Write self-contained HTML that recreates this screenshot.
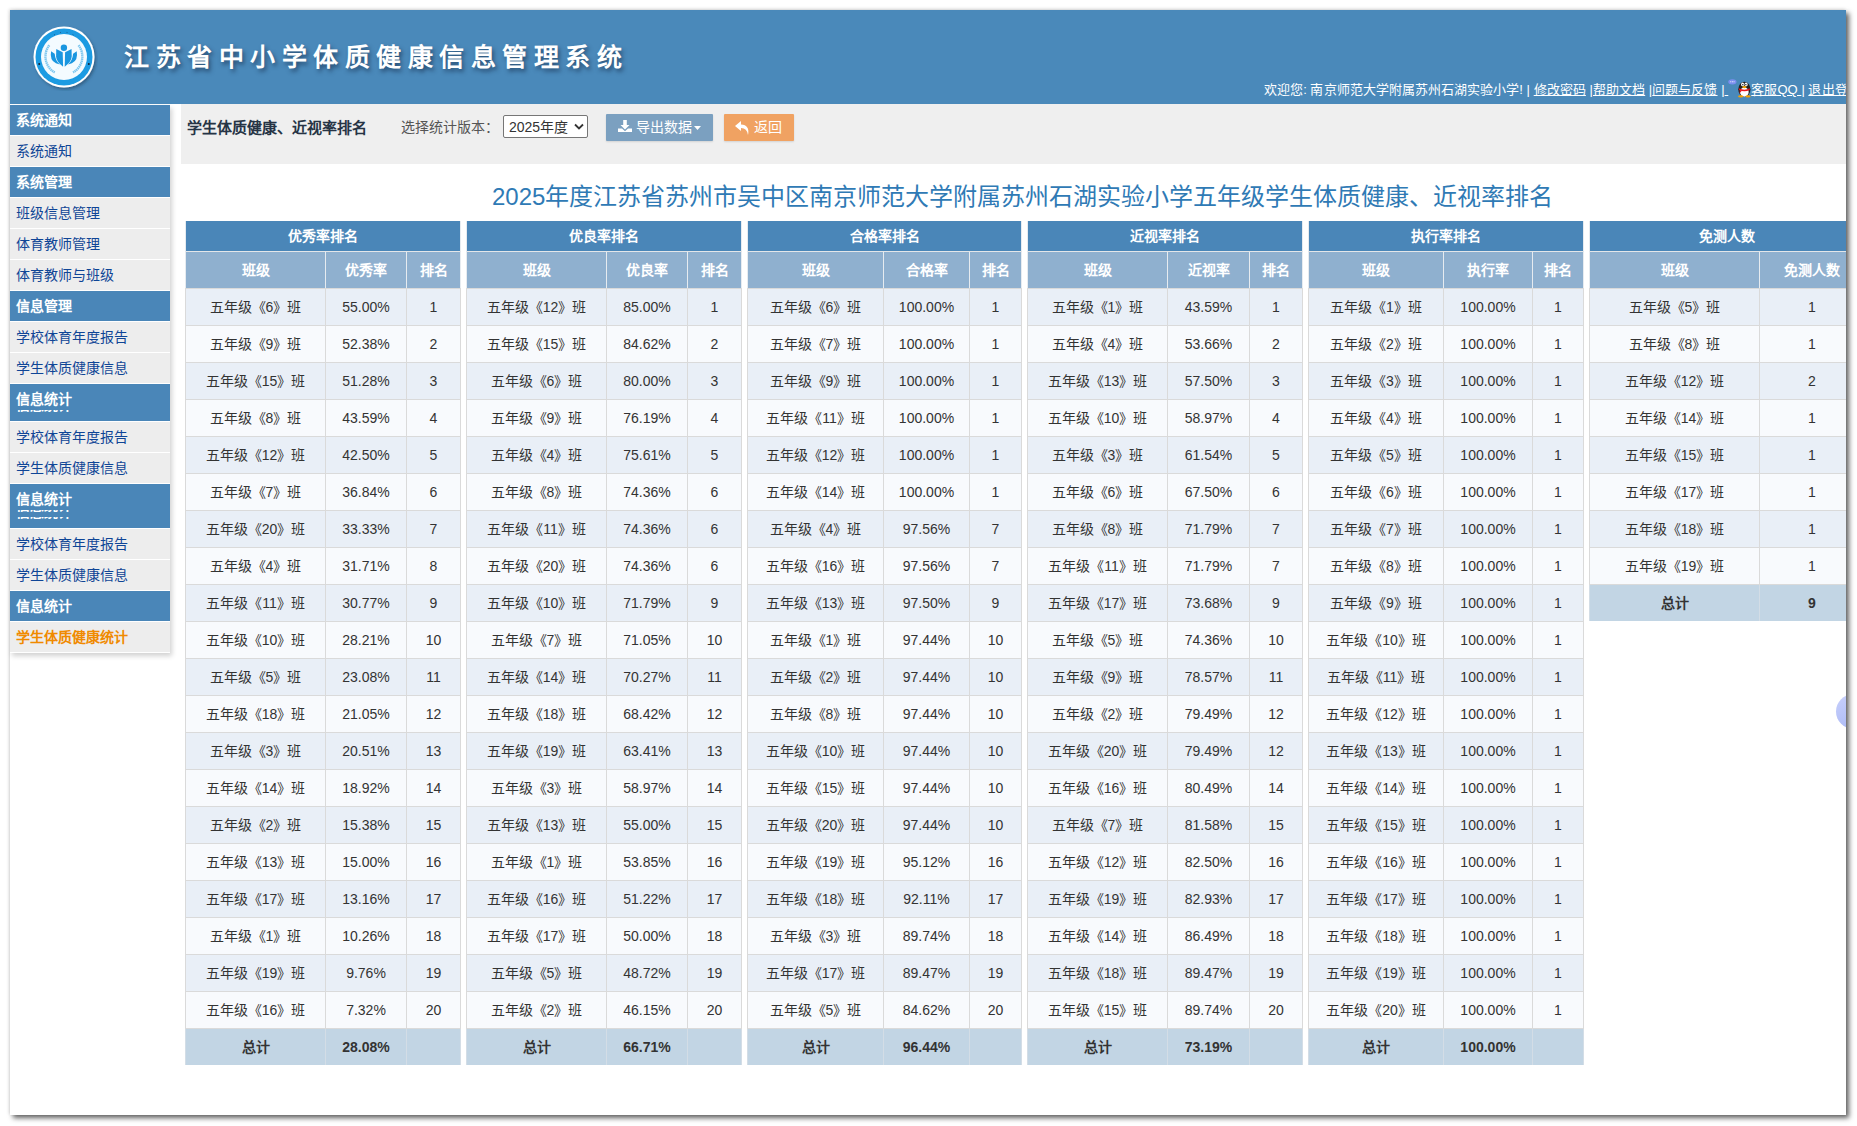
<!DOCTYPE html>
<html lang="zh-CN">
<head>
<meta charset="utf-8">
<title>江苏省中小学体质健康信息管理系统</title>
<style>
html,body{margin:0;padding:0;background:#fff;}
body{width:1857px;height:1126px;overflow:hidden;position:relative;font-family:"Liberation Sans",sans-serif;font-size:14px;color:#333;}
.win{position:absolute;left:10px;top:10px;width:1836px;height:1105px;background:#fff;box-shadow:3px 3px 5px rgba(0,0,0,.62),-1px -1px 3px rgba(0,0,0,.12);}
#clip{position:absolute;left:0;top:0;width:1846px;height:1115px;overflow:hidden;}
.a{position:absolute;white-space:nowrap;}
#hdr{position:absolute;left:10px;top:10px;width:1836px;height:94px;background:#4a89ba;}
#logo{position:absolute;left:30px;top:23px;width:68px;height:68px;}
#title{position:absolute;left:124px;top:37px;font-size:25px;line-height:40px;color:#fff;letter-spacing:6.5px;font-weight:bold;text-shadow:2px 3px 4px rgba(20,40,70,.6);}
#welcome{position:absolute;left:1264px;top:81px;font-size:13px;line-height:18px;color:#fff;white-space:nowrap;letter-spacing:.05px;}
#welcome u{text-decoration:underline;}
/* sidebar */
.sb{position:absolute;left:10px;width:160px;height:30px;line-height:30px;padding-left:6px;box-sizing:border-box;font-size:14px;white-space:nowrap;overflow:hidden;}
.sh{background:#4a86b8;color:#fff;font-weight:bold;}
.si{background:#ededed;color:#0f4596;}
.si.act{color:#f08a00;font-weight:bold;}
#sbshadow{position:absolute;left:10px;top:105px;width:160px;height:548px;box-shadow:2px 3px 5px rgba(0,0,0,.18);background:#fff;}
.strip{position:absolute;left:10px;width:160px;overflow:hidden;height:2px;}
.strip span{position:absolute;left:6px;top:-20px;color:#fff;font-weight:bold;font-size:14px;line-height:30px;}
/* toolbar */
#tbar{position:absolute;left:181px;top:104px;width:1665px;height:60px;background:#efefef;}
#pgtitle{position:absolute;left:187px;top:118px;font-size:15px;line-height:20px;font-weight:bold;color:#263445;}
#verlbl{position:absolute;left:401px;top:117px;font-size:14px;line-height:20px;color:#555;}
#sel{position:absolute;left:503px;top:115px;width:85px;height:23px;box-sizing:border-box;border:1px solid #767676;border-radius:2px;background:#fff;}
#sel span{position:absolute;left:5px;top:1px;font-size:14px;line-height:20px;color:#333;}
#btn1{position:absolute;left:606px;top:114px;width:107px;height:27px;background:#7ba0c0;border-radius:1px;box-shadow:0 1px 2px rgba(0,0,0,.12);}
#btn2{position:absolute;left:724px;top:114px;width:70px;height:27px;background:#f0a262;border-radius:1px;box-shadow:0 1px 2px rgba(0,0,0,.12);}
.btxt{position:absolute;top:4px;font-size:14px;line-height:19px;color:#fff;}
/* page heading */
#heading{position:absolute;left:492px;top:181px;font-size:24px;line-height:32px;color:#2f7ab5;white-space:nowrap;}
/* tables */
.tb{position:absolute;top:221px;}
.r{position:relative;width:100%;box-sizing:border-box;}
.c{position:absolute;top:0;height:100%;text-align:center;box-sizing:border-box;white-space:nowrap;overflow:hidden;}
.c.bl{border-left:1px solid #dadada;}
.c.br{border-right:1px solid #dadada;}
.h1{height:30px;background:#4a86b8;color:#fff;font-weight:bold;}
.h1 .c{line-height:30px;}
.h1 .c.bl,.h1 .c.br{border-color:#e6ebf0;}
.h2{height:37px;background:#8fb0cf;color:#fff;font-weight:bold;border-top:1px solid #e3e6e9;}
.h2 .c{line-height:36px;}
.h2 .c.bl,.h2 .c.br{border-color:#e6ebf0;}
.d{height:37px;border-top:1px solid #dadada;color:#333;}
.d .c{line-height:36px;}
.d.o{background:#e9eff7;}
.d.e{background:#f8fafd;}
.t{height:37px;background:#c2d5e4;border-top:1px solid #dadada;color:#333;font-weight:bold;}
.t .c{line-height:36px;}
.t .c.bl,.t .c.br{border-color:#d3dde6;}
#bubble{position:absolute;left:1836px;top:694px;width:35px;height:35px;border-radius:50%;background:linear-gradient(160deg,#c8d0fb,#a9b8f6);}
</style>
</head>
<body>
<div class="win"></div>
<div id="clip">
<div id="hdr"></div>
<svg id="logo" viewBox="0 0 68 68">
  <defs><filter id="ls" x="-20%" y="-20%" width="150%" height="150%"><feDropShadow dx="1.5" dy="2" stdDeviation="1.5" flood-color="#1d3d5c" flood-opacity=".55"/></filter></defs>
  <g filter="url(#ls)">
  <circle cx="34" cy="34" r="30.5" fill="#fff"/>
  <circle cx="34" cy="34" r="28.5" fill="#1a9be2"/>
  <circle cx="34" cy="34" r="23" fill="#f4fbff"/>
  </g>
    <circle cx="9.2" cy="41" r="1" fill="#123"/>
  <circle cx="58.8" cy="41" r="1" fill="#123"/>
  <circle cx="33.9" cy="24.7" r="3.2" fill="#1a96e0"/>
  <path d="M26.25 26.1 L32.7 29.3 L33.1 43.8 Q26.3 38.5 26.1 33.5 Z" fill="#1a96e0"/>
  <path d="M41.55 26.1 L35.1 29.3 L34.7 43.8 Q41.5 38.5 41.7 33.5 Z" fill="#1a96e0"/>
  <path d="M21.1 28.2 L24.7 30.7 Q25.2 37.5 29.8 41.4 Q21 40 20.8 32 Z" fill="#1a96e0"/>
  <path d="M46.7 28.2 L43.1 30.7 Q42.6 37.5 38 41.4 Q46.8 40 47 32 Z" fill="#1a96e0"/>
  <path d="M19.3 22.2 A18.5 18.5 0 0 0 24.7 49.5" fill="none" stroke="#7cc6ef" stroke-width="2.4" stroke-dasharray="1.5 .5"/>
  <path d="M48.5 22.2 A18.5 18.5 0 0 1 43.1 49.5" fill="none" stroke="#7cc6ef" stroke-width="2.4" stroke-dasharray="1.5 .5"/>
  <path d="M24 12 L25 11.5 M30 9.5 L31 9.4 M36.5 9.4 L37.5 9.5 M42.5 11.5 L43.5 12" stroke="#1b3b60" stroke-width=".8" opacity=".7"/>
</svg>
<div id="title">江苏省中小学体质健康信息管理系统</div>
<div id="welcome">欢迎您: 南京师范大学附属苏州石湖实验小学! | <u>修改密码</u> |<u>帮助文档</u> |<u>问题与反馈</u> |<u> </u><span class="qq" style="display:inline-block;position:relative;width:23px;height:10px;"><svg width="24" height="18.5" viewBox="0 0 22 17" style="position:absolute;left:0;top:-5px"><ellipse cx="4" cy="2.6" rx="3.8" ry="2.4" fill="#7c8ff0"/><circle cx="2.5" cy="2.6" r=".5" fill="#fff"/><circle cx="4" cy="2.6" r=".5" fill="#fff"/><circle cx="5.5" cy="2.6" r=".5" fill="#fff"/><ellipse cx="15" cy="9.5" rx="5.6" ry="7" fill="#222"/><ellipse cx="15" cy="12" rx="4" ry="4.3" fill="#fff"/><ellipse cx="13.4" cy="5" rx="1.4" ry="1.7" fill="#fff"/><ellipse cx="16.6" cy="5" rx="1.4" ry="1.7" fill="#fff"/><circle cx="13.6" cy="5.2" r=".6" fill="#000"/><circle cx="16.4" cy="5.2" r=".6" fill="#000"/><ellipse cx="15" cy="7.4" rx="2" ry="1" fill="#f5a000"/><path d="M10 8.6 Q15 11 20 8.6 L20 10 Q15 12.5 10 10 Z" fill="#e8141c"/><path d="M11 10 L10.5 13 L12.5 11 Z" fill="#e8141c"/><ellipse cx="11.6" cy="16" rx="2.4" ry="1" fill="#f5a000"/><ellipse cx="18.4" cy="16" rx="2.4" ry="1" fill="#f5a000"/></svg></span><u>客服QQ </u>| <u>退出登录</u></div>

<!--SIDEBAR-->
<div id="sbshadow"></div>
<div class="sb sh" style="top:105px">系统通知</div>
<div class="sb si" style="top:136px">系统通知</div>
<div class="sb sh" style="top:167px">系统管理</div>
<div class="sb si" style="top:198px">班级信息管理</div>
<div class="sb si" style="top:229px">体育教师管理</div>
<div class="sb si" style="top:260px">体育教师与班级</div>
<div class="sb sh" style="top:291px">信息管理</div>
<div class="sb si" style="top:322px">学校体育年度报告</div>
<div class="sb si" style="top:353px">学生体质健康信息</div>
<div class="sb sh" style="top:384px;height:37px">信息统计</div>
<div class="strip" style="top:410px"><span>信息统计</span></div>
<div class="sb si" style="top:422px">学校体育年度报告</div>
<div class="sb si" style="top:453px">学生体质健康信息</div>
<div class="sb sh" style="top:484px;height:44px">信息统计</div>
<div class="strip" style="top:510px"><span>信息统计</span></div>
<div class="strip" style="top:517px"><span>信息统计</span></div>
<div class="sb si" style="top:529px">学校体育年度报告</div>
<div class="sb si" style="top:560px">学生体质健康信息</div>
<div class="sb sh" style="top:591px">信息统计</div>
<div class="sb si act" style="top:622px">学生体质健康统计</div>

<div id="tbar"></div>
<div id="pgtitle">学生体质健康、近视率排名</div>
<div id="verlbl">选择统计版本：</div>
<div id="sel"><span>2025年度</span>
<svg style="position:absolute;left:70px;top:7px" width="10" height="8" viewBox="0 0 10 8"><path d="M1 1.5 L5 5.5 L9 1.5" fill="none" stroke="#333" stroke-width="1.8"/></svg></div>
<div id="btn1">
<svg style="position:absolute;left:12px;top:6px" width="14" height="13" viewBox="0 0 14 13"><path d="M5.2 0 H8.8 V5 H11.5 L7 9.5 L2.5 5 H5.2 Z" fill="#fff"/><path d="M0 8.5 H4 L7 11.3 L10 8.5 H14 V12 H0 Z" fill="#fff"/></svg>
<span class="btxt" style="left:30px">导出数据</span>
<svg style="position:absolute;left:88px;top:12px" width="7" height="4" viewBox="0 0 7 4"><path d="M0 0 H7 L3.5 4 Z" fill="#fff"/></svg>
</div>
<div id="btn2">
<svg style="position:absolute;left:11px;top:7px" width="15" height="14" viewBox="0 0 15 14"><path d="M6 0 L0 5 L6 10 V7 Q12 7 13 14 Q15 4 6 3.5 Z" fill="#fff"/></svg>
<span class="btxt" style="left:30px">返回</span>
</div>

<div id="heading">2025年度江苏省苏州市吴中区南京师范大学附属苏州石湖实验小学五年级学生体质健康、近视率排名</div>

<div class="tb" style="left:185px;width:276px">
<div class="r h1"><div class="c bl br" style="left:0;width:276px">优秀率排名</div></div>
<div class="r h2"><div class="c bl" style="left:0px;width:140px">班级</div><div class="c bl" style="left:140px;width:81px">优秀率</div><div class="c bl br" style="left:221px;width:55px">排名</div></div>
<div class="r d o"><div class="c bl" style="left:0px;width:140px">五年级《6》班</div><div class="c bl" style="left:140px;width:81px">55.00%</div><div class="c bl br" style="left:221px;width:55px">1</div></div>
<div class="r d e"><div class="c bl" style="left:0px;width:140px">五年级《9》班</div><div class="c bl" style="left:140px;width:81px">52.38%</div><div class="c bl br" style="left:221px;width:55px">2</div></div>
<div class="r d o"><div class="c bl" style="left:0px;width:140px">五年级《15》班</div><div class="c bl" style="left:140px;width:81px">51.28%</div><div class="c bl br" style="left:221px;width:55px">3</div></div>
<div class="r d e"><div class="c bl" style="left:0px;width:140px">五年级《8》班</div><div class="c bl" style="left:140px;width:81px">43.59%</div><div class="c bl br" style="left:221px;width:55px">4</div></div>
<div class="r d o"><div class="c bl" style="left:0px;width:140px">五年级《12》班</div><div class="c bl" style="left:140px;width:81px">42.50%</div><div class="c bl br" style="left:221px;width:55px">5</div></div>
<div class="r d e"><div class="c bl" style="left:0px;width:140px">五年级《7》班</div><div class="c bl" style="left:140px;width:81px">36.84%</div><div class="c bl br" style="left:221px;width:55px">6</div></div>
<div class="r d o"><div class="c bl" style="left:0px;width:140px">五年级《20》班</div><div class="c bl" style="left:140px;width:81px">33.33%</div><div class="c bl br" style="left:221px;width:55px">7</div></div>
<div class="r d e"><div class="c bl" style="left:0px;width:140px">五年级《4》班</div><div class="c bl" style="left:140px;width:81px">31.71%</div><div class="c bl br" style="left:221px;width:55px">8</div></div>
<div class="r d o"><div class="c bl" style="left:0px;width:140px">五年级《11》班</div><div class="c bl" style="left:140px;width:81px">30.77%</div><div class="c bl br" style="left:221px;width:55px">9</div></div>
<div class="r d e"><div class="c bl" style="left:0px;width:140px">五年级《10》班</div><div class="c bl" style="left:140px;width:81px">28.21%</div><div class="c bl br" style="left:221px;width:55px">10</div></div>
<div class="r d o"><div class="c bl" style="left:0px;width:140px">五年级《5》班</div><div class="c bl" style="left:140px;width:81px">23.08%</div><div class="c bl br" style="left:221px;width:55px">11</div></div>
<div class="r d e"><div class="c bl" style="left:0px;width:140px">五年级《18》班</div><div class="c bl" style="left:140px;width:81px">21.05%</div><div class="c bl br" style="left:221px;width:55px">12</div></div>
<div class="r d o"><div class="c bl" style="left:0px;width:140px">五年级《3》班</div><div class="c bl" style="left:140px;width:81px">20.51%</div><div class="c bl br" style="left:221px;width:55px">13</div></div>
<div class="r d e"><div class="c bl" style="left:0px;width:140px">五年级《14》班</div><div class="c bl" style="left:140px;width:81px">18.92%</div><div class="c bl br" style="left:221px;width:55px">14</div></div>
<div class="r d o"><div class="c bl" style="left:0px;width:140px">五年级《2》班</div><div class="c bl" style="left:140px;width:81px">15.38%</div><div class="c bl br" style="left:221px;width:55px">15</div></div>
<div class="r d e"><div class="c bl" style="left:0px;width:140px">五年级《13》班</div><div class="c bl" style="left:140px;width:81px">15.00%</div><div class="c bl br" style="left:221px;width:55px">16</div></div>
<div class="r d o"><div class="c bl" style="left:0px;width:140px">五年级《17》班</div><div class="c bl" style="left:140px;width:81px">13.16%</div><div class="c bl br" style="left:221px;width:55px">17</div></div>
<div class="r d e"><div class="c bl" style="left:0px;width:140px">五年级《1》班</div><div class="c bl" style="left:140px;width:81px">10.26%</div><div class="c bl br" style="left:221px;width:55px">18</div></div>
<div class="r d o"><div class="c bl" style="left:0px;width:140px">五年级《19》班</div><div class="c bl" style="left:140px;width:81px">9.76%</div><div class="c bl br" style="left:221px;width:55px">19</div></div>
<div class="r d e"><div class="c bl" style="left:0px;width:140px">五年级《16》班</div><div class="c bl" style="left:140px;width:81px">7.32%</div><div class="c bl br" style="left:221px;width:55px">20</div></div>
<div class="r t"><div class="c bl" style="left:0px;width:140px">总计</div><div class="c bl" style="left:140px;width:81px">28.08%</div><div class="c bl br" style="left:221px;width:55px"></div></div>
</div>
<div class="tb" style="left:466px;width:276px">
<div class="r h1"><div class="c bl br" style="left:0;width:276px">优良率排名</div></div>
<div class="r h2"><div class="c bl" style="left:0px;width:140px">班级</div><div class="c bl" style="left:140px;width:81px">优良率</div><div class="c bl br" style="left:221px;width:55px">排名</div></div>
<div class="r d o"><div class="c bl" style="left:0px;width:140px">五年级《12》班</div><div class="c bl" style="left:140px;width:81px">85.00%</div><div class="c bl br" style="left:221px;width:55px">1</div></div>
<div class="r d e"><div class="c bl" style="left:0px;width:140px">五年级《15》班</div><div class="c bl" style="left:140px;width:81px">84.62%</div><div class="c bl br" style="left:221px;width:55px">2</div></div>
<div class="r d o"><div class="c bl" style="left:0px;width:140px">五年级《6》班</div><div class="c bl" style="left:140px;width:81px">80.00%</div><div class="c bl br" style="left:221px;width:55px">3</div></div>
<div class="r d e"><div class="c bl" style="left:0px;width:140px">五年级《9》班</div><div class="c bl" style="left:140px;width:81px">76.19%</div><div class="c bl br" style="left:221px;width:55px">4</div></div>
<div class="r d o"><div class="c bl" style="left:0px;width:140px">五年级《4》班</div><div class="c bl" style="left:140px;width:81px">75.61%</div><div class="c bl br" style="left:221px;width:55px">5</div></div>
<div class="r d e"><div class="c bl" style="left:0px;width:140px">五年级《8》班</div><div class="c bl" style="left:140px;width:81px">74.36%</div><div class="c bl br" style="left:221px;width:55px">6</div></div>
<div class="r d o"><div class="c bl" style="left:0px;width:140px">五年级《11》班</div><div class="c bl" style="left:140px;width:81px">74.36%</div><div class="c bl br" style="left:221px;width:55px">6</div></div>
<div class="r d e"><div class="c bl" style="left:0px;width:140px">五年级《20》班</div><div class="c bl" style="left:140px;width:81px">74.36%</div><div class="c bl br" style="left:221px;width:55px">6</div></div>
<div class="r d o"><div class="c bl" style="left:0px;width:140px">五年级《10》班</div><div class="c bl" style="left:140px;width:81px">71.79%</div><div class="c bl br" style="left:221px;width:55px">9</div></div>
<div class="r d e"><div class="c bl" style="left:0px;width:140px">五年级《7》班</div><div class="c bl" style="left:140px;width:81px">71.05%</div><div class="c bl br" style="left:221px;width:55px">10</div></div>
<div class="r d o"><div class="c bl" style="left:0px;width:140px">五年级《14》班</div><div class="c bl" style="left:140px;width:81px">70.27%</div><div class="c bl br" style="left:221px;width:55px">11</div></div>
<div class="r d e"><div class="c bl" style="left:0px;width:140px">五年级《18》班</div><div class="c bl" style="left:140px;width:81px">68.42%</div><div class="c bl br" style="left:221px;width:55px">12</div></div>
<div class="r d o"><div class="c bl" style="left:0px;width:140px">五年级《19》班</div><div class="c bl" style="left:140px;width:81px">63.41%</div><div class="c bl br" style="left:221px;width:55px">13</div></div>
<div class="r d e"><div class="c bl" style="left:0px;width:140px">五年级《3》班</div><div class="c bl" style="left:140px;width:81px">58.97%</div><div class="c bl br" style="left:221px;width:55px">14</div></div>
<div class="r d o"><div class="c bl" style="left:0px;width:140px">五年级《13》班</div><div class="c bl" style="left:140px;width:81px">55.00%</div><div class="c bl br" style="left:221px;width:55px">15</div></div>
<div class="r d e"><div class="c bl" style="left:0px;width:140px">五年级《1》班</div><div class="c bl" style="left:140px;width:81px">53.85%</div><div class="c bl br" style="left:221px;width:55px">16</div></div>
<div class="r d o"><div class="c bl" style="left:0px;width:140px">五年级《16》班</div><div class="c bl" style="left:140px;width:81px">51.22%</div><div class="c bl br" style="left:221px;width:55px">17</div></div>
<div class="r d e"><div class="c bl" style="left:0px;width:140px">五年级《17》班</div><div class="c bl" style="left:140px;width:81px">50.00%</div><div class="c bl br" style="left:221px;width:55px">18</div></div>
<div class="r d o"><div class="c bl" style="left:0px;width:140px">五年级《5》班</div><div class="c bl" style="left:140px;width:81px">48.72%</div><div class="c bl br" style="left:221px;width:55px">19</div></div>
<div class="r d e"><div class="c bl" style="left:0px;width:140px">五年级《2》班</div><div class="c bl" style="left:140px;width:81px">46.15%</div><div class="c bl br" style="left:221px;width:55px">20</div></div>
<div class="r t"><div class="c bl" style="left:0px;width:140px">总计</div><div class="c bl" style="left:140px;width:81px">66.71%</div><div class="c bl br" style="left:221px;width:55px"></div></div>
</div>
<div class="tb" style="left:747px;width:275px">
<div class="r h1"><div class="c bl br" style="left:0;width:275px">合格率排名</div></div>
<div class="r h2"><div class="c bl" style="left:0px;width:136px">班级</div><div class="c bl" style="left:136px;width:86px">合格率</div><div class="c bl br" style="left:222px;width:53px">排名</div></div>
<div class="r d o"><div class="c bl" style="left:0px;width:136px">五年级《6》班</div><div class="c bl" style="left:136px;width:86px">100.00%</div><div class="c bl br" style="left:222px;width:53px">1</div></div>
<div class="r d e"><div class="c bl" style="left:0px;width:136px">五年级《7》班</div><div class="c bl" style="left:136px;width:86px">100.00%</div><div class="c bl br" style="left:222px;width:53px">1</div></div>
<div class="r d o"><div class="c bl" style="left:0px;width:136px">五年级《9》班</div><div class="c bl" style="left:136px;width:86px">100.00%</div><div class="c bl br" style="left:222px;width:53px">1</div></div>
<div class="r d e"><div class="c bl" style="left:0px;width:136px">五年级《11》班</div><div class="c bl" style="left:136px;width:86px">100.00%</div><div class="c bl br" style="left:222px;width:53px">1</div></div>
<div class="r d o"><div class="c bl" style="left:0px;width:136px">五年级《12》班</div><div class="c bl" style="left:136px;width:86px">100.00%</div><div class="c bl br" style="left:222px;width:53px">1</div></div>
<div class="r d e"><div class="c bl" style="left:0px;width:136px">五年级《14》班</div><div class="c bl" style="left:136px;width:86px">100.00%</div><div class="c bl br" style="left:222px;width:53px">1</div></div>
<div class="r d o"><div class="c bl" style="left:0px;width:136px">五年级《4》班</div><div class="c bl" style="left:136px;width:86px">97.56%</div><div class="c bl br" style="left:222px;width:53px">7</div></div>
<div class="r d e"><div class="c bl" style="left:0px;width:136px">五年级《16》班</div><div class="c bl" style="left:136px;width:86px">97.56%</div><div class="c bl br" style="left:222px;width:53px">7</div></div>
<div class="r d o"><div class="c bl" style="left:0px;width:136px">五年级《13》班</div><div class="c bl" style="left:136px;width:86px">97.50%</div><div class="c bl br" style="left:222px;width:53px">9</div></div>
<div class="r d e"><div class="c bl" style="left:0px;width:136px">五年级《1》班</div><div class="c bl" style="left:136px;width:86px">97.44%</div><div class="c bl br" style="left:222px;width:53px">10</div></div>
<div class="r d o"><div class="c bl" style="left:0px;width:136px">五年级《2》班</div><div class="c bl" style="left:136px;width:86px">97.44%</div><div class="c bl br" style="left:222px;width:53px">10</div></div>
<div class="r d e"><div class="c bl" style="left:0px;width:136px">五年级《8》班</div><div class="c bl" style="left:136px;width:86px">97.44%</div><div class="c bl br" style="left:222px;width:53px">10</div></div>
<div class="r d o"><div class="c bl" style="left:0px;width:136px">五年级《10》班</div><div class="c bl" style="left:136px;width:86px">97.44%</div><div class="c bl br" style="left:222px;width:53px">10</div></div>
<div class="r d e"><div class="c bl" style="left:0px;width:136px">五年级《15》班</div><div class="c bl" style="left:136px;width:86px">97.44%</div><div class="c bl br" style="left:222px;width:53px">10</div></div>
<div class="r d o"><div class="c bl" style="left:0px;width:136px">五年级《20》班</div><div class="c bl" style="left:136px;width:86px">97.44%</div><div class="c bl br" style="left:222px;width:53px">10</div></div>
<div class="r d e"><div class="c bl" style="left:0px;width:136px">五年级《19》班</div><div class="c bl" style="left:136px;width:86px">95.12%</div><div class="c bl br" style="left:222px;width:53px">16</div></div>
<div class="r d o"><div class="c bl" style="left:0px;width:136px">五年级《18》班</div><div class="c bl" style="left:136px;width:86px">92.11%</div><div class="c bl br" style="left:222px;width:53px">17</div></div>
<div class="r d e"><div class="c bl" style="left:0px;width:136px">五年级《3》班</div><div class="c bl" style="left:136px;width:86px">89.74%</div><div class="c bl br" style="left:222px;width:53px">18</div></div>
<div class="r d o"><div class="c bl" style="left:0px;width:136px">五年级《17》班</div><div class="c bl" style="left:136px;width:86px">89.47%</div><div class="c bl br" style="left:222px;width:53px">19</div></div>
<div class="r d e"><div class="c bl" style="left:0px;width:136px">五年级《5》班</div><div class="c bl" style="left:136px;width:86px">84.62%</div><div class="c bl br" style="left:222px;width:53px">20</div></div>
<div class="r t"><div class="c bl" style="left:0px;width:136px">总计</div><div class="c bl" style="left:136px;width:86px">96.44%</div><div class="c bl br" style="left:222px;width:53px"></div></div>
</div>
<div class="tb" style="left:1027px;width:276px">
<div class="r h1"><div class="c bl br" style="left:0;width:276px">近视率排名</div></div>
<div class="r h2"><div class="c bl" style="left:0px;width:140px">班级</div><div class="c bl" style="left:140px;width:82px">近视率</div><div class="c bl br" style="left:222px;width:54px">排名</div></div>
<div class="r d o"><div class="c bl" style="left:0px;width:140px">五年级《1》班</div><div class="c bl" style="left:140px;width:82px">43.59%</div><div class="c bl br" style="left:222px;width:54px">1</div></div>
<div class="r d e"><div class="c bl" style="left:0px;width:140px">五年级《4》班</div><div class="c bl" style="left:140px;width:82px">53.66%</div><div class="c bl br" style="left:222px;width:54px">2</div></div>
<div class="r d o"><div class="c bl" style="left:0px;width:140px">五年级《13》班</div><div class="c bl" style="left:140px;width:82px">57.50%</div><div class="c bl br" style="left:222px;width:54px">3</div></div>
<div class="r d e"><div class="c bl" style="left:0px;width:140px">五年级《10》班</div><div class="c bl" style="left:140px;width:82px">58.97%</div><div class="c bl br" style="left:222px;width:54px">4</div></div>
<div class="r d o"><div class="c bl" style="left:0px;width:140px">五年级《3》班</div><div class="c bl" style="left:140px;width:82px">61.54%</div><div class="c bl br" style="left:222px;width:54px">5</div></div>
<div class="r d e"><div class="c bl" style="left:0px;width:140px">五年级《6》班</div><div class="c bl" style="left:140px;width:82px">67.50%</div><div class="c bl br" style="left:222px;width:54px">6</div></div>
<div class="r d o"><div class="c bl" style="left:0px;width:140px">五年级《8》班</div><div class="c bl" style="left:140px;width:82px">71.79%</div><div class="c bl br" style="left:222px;width:54px">7</div></div>
<div class="r d e"><div class="c bl" style="left:0px;width:140px">五年级《11》班</div><div class="c bl" style="left:140px;width:82px">71.79%</div><div class="c bl br" style="left:222px;width:54px">7</div></div>
<div class="r d o"><div class="c bl" style="left:0px;width:140px">五年级《17》班</div><div class="c bl" style="left:140px;width:82px">73.68%</div><div class="c bl br" style="left:222px;width:54px">9</div></div>
<div class="r d e"><div class="c bl" style="left:0px;width:140px">五年级《5》班</div><div class="c bl" style="left:140px;width:82px">74.36%</div><div class="c bl br" style="left:222px;width:54px">10</div></div>
<div class="r d o"><div class="c bl" style="left:0px;width:140px">五年级《9》班</div><div class="c bl" style="left:140px;width:82px">78.57%</div><div class="c bl br" style="left:222px;width:54px">11</div></div>
<div class="r d e"><div class="c bl" style="left:0px;width:140px">五年级《2》班</div><div class="c bl" style="left:140px;width:82px">79.49%</div><div class="c bl br" style="left:222px;width:54px">12</div></div>
<div class="r d o"><div class="c bl" style="left:0px;width:140px">五年级《20》班</div><div class="c bl" style="left:140px;width:82px">79.49%</div><div class="c bl br" style="left:222px;width:54px">12</div></div>
<div class="r d e"><div class="c bl" style="left:0px;width:140px">五年级《16》班</div><div class="c bl" style="left:140px;width:82px">80.49%</div><div class="c bl br" style="left:222px;width:54px">14</div></div>
<div class="r d o"><div class="c bl" style="left:0px;width:140px">五年级《7》班</div><div class="c bl" style="left:140px;width:82px">81.58%</div><div class="c bl br" style="left:222px;width:54px">15</div></div>
<div class="r d e"><div class="c bl" style="left:0px;width:140px">五年级《12》班</div><div class="c bl" style="left:140px;width:82px">82.50%</div><div class="c bl br" style="left:222px;width:54px">16</div></div>
<div class="r d o"><div class="c bl" style="left:0px;width:140px">五年级《19》班</div><div class="c bl" style="left:140px;width:82px">82.93%</div><div class="c bl br" style="left:222px;width:54px">17</div></div>
<div class="r d e"><div class="c bl" style="left:0px;width:140px">五年级《14》班</div><div class="c bl" style="left:140px;width:82px">86.49%</div><div class="c bl br" style="left:222px;width:54px">18</div></div>
<div class="r d o"><div class="c bl" style="left:0px;width:140px">五年级《18》班</div><div class="c bl" style="left:140px;width:82px">89.47%</div><div class="c bl br" style="left:222px;width:54px">19</div></div>
<div class="r d e"><div class="c bl" style="left:0px;width:140px">五年级《15》班</div><div class="c bl" style="left:140px;width:82px">89.74%</div><div class="c bl br" style="left:222px;width:54px">20</div></div>
<div class="r t"><div class="c bl" style="left:0px;width:140px">总计</div><div class="c bl" style="left:140px;width:82px">73.19%</div><div class="c bl br" style="left:222px;width:54px"></div></div>
</div>
<div class="tb" style="left:1308px;width:276px">
<div class="r h1"><div class="c bl br" style="left:0;width:276px">执行率排名</div></div>
<div class="r h2"><div class="c bl" style="left:0px;width:135px">班级</div><div class="c bl" style="left:135px;width:89px">执行率</div><div class="c bl br" style="left:224px;width:52px">排名</div></div>
<div class="r d o"><div class="c bl" style="left:0px;width:135px">五年级《1》班</div><div class="c bl" style="left:135px;width:89px">100.00%</div><div class="c bl br" style="left:224px;width:52px">1</div></div>
<div class="r d e"><div class="c bl" style="left:0px;width:135px">五年级《2》班</div><div class="c bl" style="left:135px;width:89px">100.00%</div><div class="c bl br" style="left:224px;width:52px">1</div></div>
<div class="r d o"><div class="c bl" style="left:0px;width:135px">五年级《3》班</div><div class="c bl" style="left:135px;width:89px">100.00%</div><div class="c bl br" style="left:224px;width:52px">1</div></div>
<div class="r d e"><div class="c bl" style="left:0px;width:135px">五年级《4》班</div><div class="c bl" style="left:135px;width:89px">100.00%</div><div class="c bl br" style="left:224px;width:52px">1</div></div>
<div class="r d o"><div class="c bl" style="left:0px;width:135px">五年级《5》班</div><div class="c bl" style="left:135px;width:89px">100.00%</div><div class="c bl br" style="left:224px;width:52px">1</div></div>
<div class="r d e"><div class="c bl" style="left:0px;width:135px">五年级《6》班</div><div class="c bl" style="left:135px;width:89px">100.00%</div><div class="c bl br" style="left:224px;width:52px">1</div></div>
<div class="r d o"><div class="c bl" style="left:0px;width:135px">五年级《7》班</div><div class="c bl" style="left:135px;width:89px">100.00%</div><div class="c bl br" style="left:224px;width:52px">1</div></div>
<div class="r d e"><div class="c bl" style="left:0px;width:135px">五年级《8》班</div><div class="c bl" style="left:135px;width:89px">100.00%</div><div class="c bl br" style="left:224px;width:52px">1</div></div>
<div class="r d o"><div class="c bl" style="left:0px;width:135px">五年级《9》班</div><div class="c bl" style="left:135px;width:89px">100.00%</div><div class="c bl br" style="left:224px;width:52px">1</div></div>
<div class="r d e"><div class="c bl" style="left:0px;width:135px">五年级《10》班</div><div class="c bl" style="left:135px;width:89px">100.00%</div><div class="c bl br" style="left:224px;width:52px">1</div></div>
<div class="r d o"><div class="c bl" style="left:0px;width:135px">五年级《11》班</div><div class="c bl" style="left:135px;width:89px">100.00%</div><div class="c bl br" style="left:224px;width:52px">1</div></div>
<div class="r d e"><div class="c bl" style="left:0px;width:135px">五年级《12》班</div><div class="c bl" style="left:135px;width:89px">100.00%</div><div class="c bl br" style="left:224px;width:52px">1</div></div>
<div class="r d o"><div class="c bl" style="left:0px;width:135px">五年级《13》班</div><div class="c bl" style="left:135px;width:89px">100.00%</div><div class="c bl br" style="left:224px;width:52px">1</div></div>
<div class="r d e"><div class="c bl" style="left:0px;width:135px">五年级《14》班</div><div class="c bl" style="left:135px;width:89px">100.00%</div><div class="c bl br" style="left:224px;width:52px">1</div></div>
<div class="r d o"><div class="c bl" style="left:0px;width:135px">五年级《15》班</div><div class="c bl" style="left:135px;width:89px">100.00%</div><div class="c bl br" style="left:224px;width:52px">1</div></div>
<div class="r d e"><div class="c bl" style="left:0px;width:135px">五年级《16》班</div><div class="c bl" style="left:135px;width:89px">100.00%</div><div class="c bl br" style="left:224px;width:52px">1</div></div>
<div class="r d o"><div class="c bl" style="left:0px;width:135px">五年级《17》班</div><div class="c bl" style="left:135px;width:89px">100.00%</div><div class="c bl br" style="left:224px;width:52px">1</div></div>
<div class="r d e"><div class="c bl" style="left:0px;width:135px">五年级《18》班</div><div class="c bl" style="left:135px;width:89px">100.00%</div><div class="c bl br" style="left:224px;width:52px">1</div></div>
<div class="r d o"><div class="c bl" style="left:0px;width:135px">五年级《19》班</div><div class="c bl" style="left:135px;width:89px">100.00%</div><div class="c bl br" style="left:224px;width:52px">1</div></div>
<div class="r d e"><div class="c bl" style="left:0px;width:135px">五年级《20》班</div><div class="c bl" style="left:135px;width:89px">100.00%</div><div class="c bl br" style="left:224px;width:52px">1</div></div>
<div class="r t"><div class="c bl" style="left:0px;width:135px">总计</div><div class="c bl" style="left:135px;width:89px">100.00%</div><div class="c bl br" style="left:224px;width:52px"></div></div>
</div>
<div class="tb" style="left:1589px;width:276px">
<div class="r h1"><div class="c bl br" style="left:0;width:276px">免测人数</div></div>
<div class="r h2"><div class="c bl" style="left:0px;width:170px">班级</div><div class="c bl br" style="left:170px;width:106px">免测人数</div></div>
<div class="r d o"><div class="c bl" style="left:0px;width:170px">五年级《5》班</div><div class="c bl br" style="left:170px;width:106px">1</div></div>
<div class="r d e"><div class="c bl" style="left:0px;width:170px">五年级《8》班</div><div class="c bl br" style="left:170px;width:106px">1</div></div>
<div class="r d o"><div class="c bl" style="left:0px;width:170px">五年级《12》班</div><div class="c bl br" style="left:170px;width:106px">2</div></div>
<div class="r d e"><div class="c bl" style="left:0px;width:170px">五年级《14》班</div><div class="c bl br" style="left:170px;width:106px">1</div></div>
<div class="r d o"><div class="c bl" style="left:0px;width:170px">五年级《15》班</div><div class="c bl br" style="left:170px;width:106px">1</div></div>
<div class="r d e"><div class="c bl" style="left:0px;width:170px">五年级《17》班</div><div class="c bl br" style="left:170px;width:106px">1</div></div>
<div class="r d o"><div class="c bl" style="left:0px;width:170px">五年级《18》班</div><div class="c bl br" style="left:170px;width:106px">1</div></div>
<div class="r d e"><div class="c bl" style="left:0px;width:170px">五年级《19》班</div><div class="c bl br" style="left:170px;width:106px">1</div></div>
<div class="r t"><div class="c bl" style="left:0px;width:170px">总计</div><div class="c bl br" style="left:170px;width:106px">9</div></div>
</div>

<div id="bubble"></div>
</div>
</body>
</html>
